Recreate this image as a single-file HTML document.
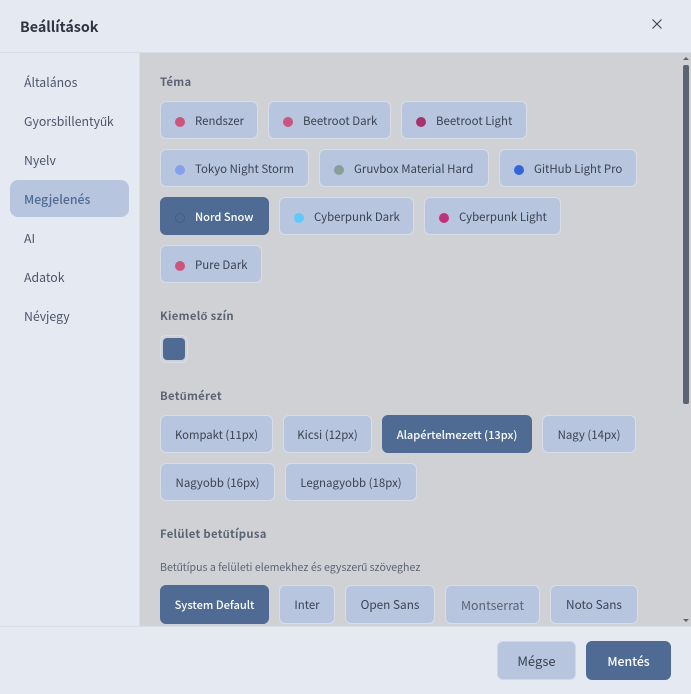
<!DOCTYPE html>
<html lang="hu">
<head>
<meta charset="utf-8">
<title>Beállítások</title>
<style>
html,body{margin:0;padding:0;width:691px;height:694px;overflow:hidden;background:#e5e9f2}
*{box-sizing:border-box}
body{position:relative;font-family:"Noto Sans CJK JP","Liberation Sans",sans-serif;font-size:13px;color:#3b4252}
.a{position:absolute}
.hdr{left:0;top:0;width:691px;height:53px;background:#e5e9f2;border-bottom:1px solid #d8dde8}
.title{left:20px;top:15px;line-height:24px;font-size:14.3px;font-weight:700;color:#2e3440}
.side{left:0;top:53px;width:140px;height:573px;background:#e5e9f2;border-right:1px solid #d8dde8}
.content{left:140px;top:53px;width:551px;height:573px;background:#d0d1d5}
.foot{left:0;top:626px;width:691px;height:68px;background:#e5e9f2;border-top:1px solid #d8dde8}
.nav{position:absolute;left:24px;line-height:20px;font-size:12.3px;color:#4c566a}
.navact{left:10px;top:180px;width:119px;height:37px;background:#b8c5de;border-radius:8px}
.lbl{position:absolute;left:160px;line-height:18px;font-size:11.3px;font-weight:700;color:#5b6473;letter-spacing:.3px}
.sub{position:absolute;left:160px;line-height:16px;font-size:10.6px;color:#5b6473}
.b{position:absolute;height:38px;background:#b8c5de;border:1px solid #d8dee9;border-radius:6px;line-height:38px;color:#3b4252;font-size:11.45px;white-space:nowrap;text-align:center}
.b.on{background:#4f6b93;border-color:#4f6b93;color:#fff;font-weight:500;font-size:11.1px}
.t{text-align:left;padding-left:34px}
.d{position:absolute;left:14px;top:15px;width:10px;height:10px;border-radius:50%}
</style>
</head>
<body>
<div class="a hdr"></div>
<div class="a title">Beállítások</div>
<svg class="a" style="left:651px;top:18px" width="12" height="12" viewBox="0 0 12 12"><path d="M1.5 1.5L10.5 10.5M10.5 1.5L1.5 10.5" stroke="#3b4252" stroke-width="1.1" fill="none"/></svg>

<div class="a side"></div>
<div class="a navact"></div>
<div class="nav" style="top:72px">Általános</div>
<div class="nav" style="top:111px">Gyorsbillentyűk</div>
<div class="nav" style="top:150px">Nyelv</div>
<div class="nav" style="top:189px;color:#4f6b93;font-weight:500">Megjelenés</div>
<div class="nav" style="top:228px">AI</div>
<div class="nav" style="top:267px">Adatok</div>
<div class="nav" style="top:306px">Névjegy</div>

<div class="a content"></div>

<div class="lbl" style="top:73px">Téma</div>
<div class="b t" style="left:160px;top:101px;width:98px"><i class="d" style="background:#cc5580"></i>Rendszer</div>
<div class="b t" style="left:268px;top:101px;width:123px"><i class="d" style="background:#cc5580"></i>Beetroot Dark</div>
<div class="b t" style="left:401px;top:101px;width:126px"><i class="d" style="background:#a8326e"></i>Beetroot Light</div>
<div class="b t" style="left:160px;top:149px;width:149px"><i class="d" style="background:#85a1ee"></i>Tokyo Night Storm</div>
<div class="b t" style="left:319px;top:149px;width:170px"><i class="d" style="background:#8a9e98"></i>Gruvbox Material Hard</div>
<div class="b t" style="left:499px;top:149px;width:138px"><i class="d" style="background:#3166d8"></i>GitHub Light Pro</div>
<div class="b t on" style="left:160px;top:197px;width:109px"><i class="d" style="background:#4f6b93;border:1px solid #475b7c"></i>Nord Snow</div>
<div class="b t" style="left:279px;top:197px;width:135px"><i class="d" style="background:#5ccbfa"></i>Cyberpunk Dark</div>
<div class="b t" style="left:424px;top:197px;width:137px"><i class="d" style="background:#c0317a"></i>Cyberpunk Light</div>
<div class="b t" style="left:160px;top:245px;width:102px"><i class="d" style="background:#cc5580"></i>Pure Dark</div>

<div class="lbl" style="top:307px">Kiemelő szín</div>
<div class="a" style="left:160px;top:335px;width:28px;height:28px;border:1px solid #d8dee9;border-radius:6px"></div>
<div class="a" style="left:163px;top:338px;width:22px;height:22px;background:#4f6b93;border-radius:4px"></div>

<div class="lbl" style="top:387px">Betűméret</div>
<div class="b" style="left:160px;top:415px;width:113px;font-size:11.3px">Kompakt (11px)</div>
<div class="b" style="left:283px;top:415px;width:89px">Kicsi (12px)</div>
<div class="b on" style="left:382px;top:415px;width:150px">Alapértelmezett (13px)</div>
<div class="b" style="left:542px;top:415px;width:94px">Nagy (14px)</div>
<div class="b" style="left:160px;top:463px;width:115px">Nagyobb (16px)</div>
<div class="b" style="left:285px;top:463px;width:132px">Legnagyobb (18px)</div>

<div class="lbl" style="top:525px">Felület betűtípusa</div>
<div class="sub" style="top:560px">Betűtípus a felületi elemekhez és egyszerű szöveghez</div>
<div class="b on" style="left:160px;top:585px;width:109px;height:39px;line-height:39px">System Default</div>
<div class="b" style="left:279px;top:585px;width:56px;height:39px">Inter</div>
<div class="b" style="left:345px;top:585px;width:90px;height:39px;font-size:11.8px">Open Sans</div>
<div class="b" style="left:445px;top:585px;width:95px;height:39px;color:#5b6473;font-size:12.4px">Montserrat</div>
<div class="b" style="left:550px;top:585px;width:88px;height:39px;font-size:11.8px">Noto Sans</div>

<svg class="a" style="left:683px;top:56px" width="6" height="5" viewBox="0 0 6 5"><path d="M3 1L6 4H0Z" fill="#5b6473"/></svg>
<div class="a" style="left:683px;top:65px;width:6px;height:339px;background:#5b6473;border-radius:2px"></div>
<svg class="a" style="left:683px;top:618px" width="6" height="5" viewBox="0 0 6 5"><path d="M0 1H6L3 4Z" fill="#5b6473"/></svg>

<div class="a foot"></div>
<div class="b" style="left:497px;top:641px;width:79px;height:39px;line-height:38px;font-size:13px;background:#b8c5de;border-color:#cfd6e6">Mégse</div>
<div class="b on" style="left:586px;top:641px;width:85px;height:39px;line-height:38px;font-size:12.3px">Mentés</div>
</body>
</html>
